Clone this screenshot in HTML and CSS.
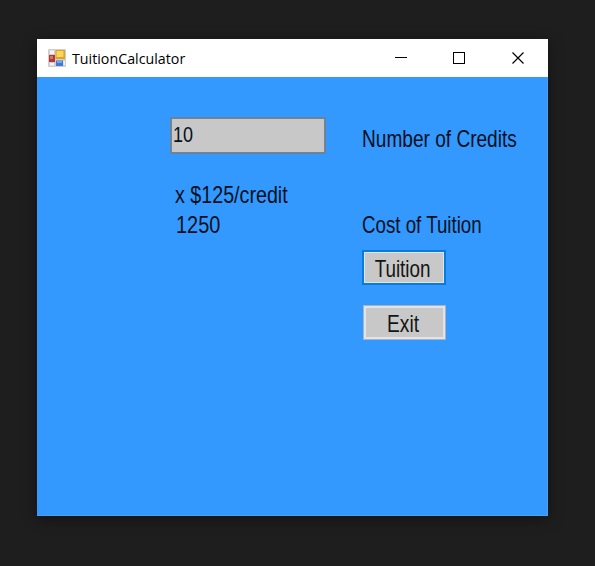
FILE: index.html
```html
<!DOCTYPE html>
<html lang="en">
<head>
<meta charset="utf-8">
<title>TuitionCalculator</title>
<link rel="stylesheet" href="styles.css">
</head>
<body>
<main class="window">
  <header class="titlebar">
    <svg class="app-icon" width="18" height="18" viewBox="0 0 18 18">
      <rect width="18" height="18" rx="1" fill="#cfcfd1"/>
      <path d="M2 1.500h4v3.500H2zM2 14h4v2.500H2zM15.500 12h1.500v4h-1.500z" fill="#f4f4f4"/>
      <rect x="1" y="6" width="6" height="7" fill="#b33a34"/>
      <rect x="2" y="7" width="3" height="3" fill="#dc7068"/>
      <rect x="7.5" y="1" width="9.5" height="9" fill="#dda51c"/>
      <rect x="8.5" y="2" width="7" height="6" fill="#fad45c"/>
      <rect x="8" y="11.500" width="7" height="5.500" fill="#3f78d8"/>
      <rect x="9" y="12" width="5" height="2" fill="#75a5ef"/>
    </svg>
    <h1 class="title"><span class="title-text">TuitionCalculator</span></h1>
    <svg class="controls" width="130" height="12" viewBox="0 0 130 12" fill="none" stroke="#000">
      <path d="M0 5.500h12M58.500 .5h11v11h-11z" shape-rendering="crispEdges"/>
      <path d="M117.500 .5l11 11M128.500 .5l-11 11" stroke-width="1.200"/>
    </svg>
  </header>
  <form class="form">
    <div class="values">
      <div class="field"><span class="text text-input">10</span></div>
      <div class="line rate"><span class="text text-rate">x $125/credit</span></div>
      <div class="line total"><span class="text text-total">1250</span></div>
    </div>
    <div class="actions">
      <div class="line"><span class="text text-credits">Number of Credits</span></div>
      <div class="line cost"><span class="text text-cost">Cost of Tuition</span></div>
      <button class="button focused" type="button"><span class="text text-tuition">Tuition</span></button>
      <button class="button" type="button"><span class="text text-exit">Exit</span></button>
    </div>
  </form>
</main>
</body>
</html>
```
FILE: styles.css
```css
* { box-sizing: border-box; }
body {
  margin: 0;
  height: 566px;
  padding: 39px 47px 50px 37px;
  background: #1e1e1e;
  overflow: hidden;
}
.window {
  width: 511px;
  height: 477px;
  background: #3399ff;
  box-shadow: 0 3px 14px rgba(0, 0, 0, .4);
}
.titlebar {
  display: flex;
  align-items: center;
  height: 38px;
  padding: 0 23px 0 11px;
  background: #fff;
}
.title {
  flex: 1;
  margin: 0 0 0 6px;
  font: 400 15px/20px "Open Sans", sans-serif;
  color: #000;
}
.title-text {
  display: inline-block;
  transform: scaleX(.95);
  transform-origin: left;
}
.form {
  display: grid;
  grid-template-columns: 156px 160px;
  column-gap: 36px;
  height: 439px;
  padding: 40px 0 0 133px;
  border: solid #4aa0f2;
  border-width: 0 1px 1px 0;
}
.field {
  display: flex;
  align-items: center;
  height: 37px;
  padding: 0 0 2px 2px;
  border: 1px solid #5c84ac;
  background: #c8c8c8;
  box-shadow: inset 0 0 0 1px #7f8284;
}
.text {
  display: inline-block;
  white-space: nowrap;
  transform-origin: left;
  font: 24px/30px "Liberation Sans", Arial, sans-serif;
  color: #06101c;
}
.line { height: 30px; }
.rate { margin-top: 26px; }
.values .line { padding-left: 5px; }
.values .total { padding-left: 6px; }
.actions { padding-top: 7px; }
.cost { margin-top: 56px; }
.button {
  display: flex;
  align-items: center;
  justify-content: center;
  width: 83px;
  height: 35px;
  margin: 20px 0 0 1px;
  padding: 3px 2px 0 0;
  border: 1px solid #a4b4c6;
  background: #c8c8c8;
  box-shadow: inset 0 0 0 2px #e3e3e3;
}
.button .text {
  transform-origin: center;
  color: #141414;
}
.focused {
  width: 84px;
  margin: 10px 0 0;
  border: 2px solid #087cdc;
  box-shadow: inset 0 0 0 1px #e3e3e3;
}
.text-input { font-size: 22.500px; transform: scaleX(.8); }
.text-rate { transform: scaleX(.82); }
.text-total { transform: scaleX(.83); }
.text-credits { transform: scaleX(.795); }
.text-cost { transform: scaleX(.78); }
.text-tuition { transform: scaleX(.785); }
.text-exit { transform: scaleX(.8); }
```
